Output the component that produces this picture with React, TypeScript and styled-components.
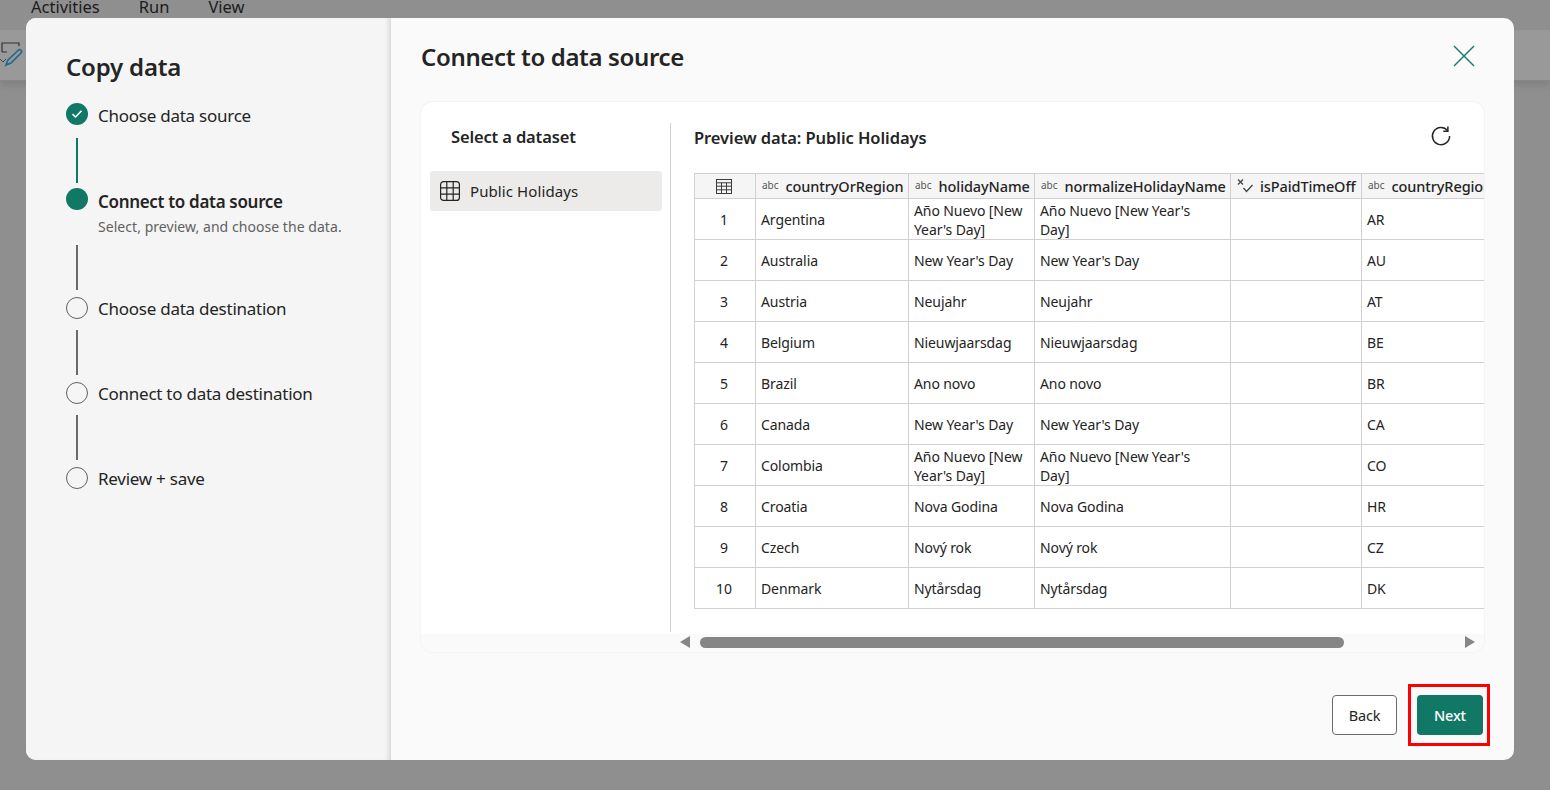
import React from "react";
import styled, { createGlobalStyle } from "styled-components";

const Global = createGlobalStyle`
  html, body { margin: 0; padding: 0; height: 100%; overflow: hidden; }
  body { font-family: "Noto Sans", "Open Sans", "Liberation Sans", sans-serif; color: #242424; background: #8f8f8f; }
`;

const Page = styled.div`
  position: relative;
  width: 1550px;
  height: 790px;
  overflow: hidden;
  background: #8f8f8f;
`;
const MenuBar = styled.div`
  height: 30px;
  display: flex;
  gap: 39px;
  padding-left: 31px;
  background: #8f8f8f;
  color: #1c1c1c;
  font-size: 16.5px;
  line-height: 13px;
  overflow: hidden;
  align-items: flex-start;
`;
const ToolBar = styled.div`
  height: 50px;
  background: #999999;
  border-bottom: 1px solid #868686;
  box-shadow: 0 4px 6px rgba(0, 0, 0, 0.1);
  display: flex;
  align-items: center;
`;
const Dialog = styled.div`
  position: absolute;
  left: 26px;
  top: 18px;
  width: 1488px;
  height: 742px;
  border-radius: 10px;
  overflow: hidden;
  display: flex;
  background: #fafafa;
`;
const Side = styled.aside`
  width: 365px;
  flex: none;
  background: #f5f5f5;
  box-shadow: inset -5px 0 5px -3px rgba(0, 0, 0, 0.13);
  padding: 32px 0 0 40px;
  box-sizing: border-box;
`;
const SideTitle = styled.h1`
  margin: 0 0 20px;
  font-size: 24px;
  line-height: 34px;
  font-weight: 600;
  height: 33px;
  letter-spacing: -0.2px;
`;
const Step = styled.div`
  display: flex;
  gap: 10px;
  align-items: flex-start;
`;
const Dot = styled.span<{ $state: "done" | "active" | "todo" }>`
  width: 22px;
  height: 22px;
  flex: none;
  box-sizing: border-box;
  border-radius: 50%;
  display: flex;
  align-items: center;
  justify-content: center;
  background: ${(p) => (p.$state === "todo" ? "transparent" : "#117865")};
  border: ${(p) => (p.$state === "todo" ? "1px solid #616161" : "none")};
`;
const StepText = styled.div<{ $top: number }>`
  padding-top: ${(p) => p.$top}px;
  margin-bottom: ${(p) => p.$top - 6}px;
`;
const StepLabel = styled.div<{ $bold?: boolean }>`
  font-size: 17px;
  line-height: 24px;
  font-weight: ${(p) => (p.$bold ? 600 : 400)};
  letter-spacing: ${(p) => (p.$bold ? "-0.32px" : "-0.25px")};
  color: #242424;
`;
const StepSub = styled.div`
  font-size: 14px;
  line-height: 20px;
  margin-top: 3px;
  color: #616161;
  letter-spacing: 0.05px;
`;
const Connector = styled.div<{ $top: number; $bottom: number; $done?: boolean }>`
  width: 2px;
  height: 45px;
  margin: ${(p) => p.$top}px 0 ${(p) => p.$bottom}px 10px;
  background: ${(p) => (p.$done ? "#117865" : "#6b6b6b")};
`;
const Main = styled.main`
  flex: 1;
  min-width: 0;
  padding: 0 30px 0 30px;
  display: flex;
  flex-direction: column;
`;
const MainHead = styled.header`
  height: 84px;
  display: flex;
  align-items: flex-start;
  justify-content: space-between;
`;
const MainTitle = styled.h2`
  margin: 21px 0 0;
  font-size: 24px;
  line-height: 36px;
  font-weight: 600;
  letter-spacing: -0.35px;
`;
const CloseBtn = styled.button`
  border: 0;
  background: none;
  padding: 0;
  margin: 27px 9px 0 0;
  width: 22px;
  height: 22px;
  display: flex;
`;
const Card = styled.section`
  height: 550px;
  box-sizing: border-box;
  background: #fff;
  border-radius: 12px;
  box-shadow: 0 0 2px rgba(0, 0, 0, 0.1);
  overflow: hidden;
  display: flex;
  flex-direction: column;
`;
const CardBody = styled.div`
  flex: 1;
  display: flex;
  min-height: 0;
  padding-top: 21px;
`;
const DataPane = styled.div`
  width: 250px;
  flex: none;
  box-sizing: border-box;
  border-right: 1px solid #d1d1d1;
  height: 509px;
  padding: 0 8px 0 9px;
`;
const PaneTitle = styled.h3`
  margin: 1px 0 21px 21px;
  font-size: 16.5px;
  line-height: 26px;
  font-weight: 600;
  letter-spacing: -0.15px;
`;
const DataItem = styled.div`
  height: 40px;
  background: #edebe9;
  border-radius: 3px;
  display: flex;
  align-items: center;
  gap: 10px;
  padding-left: 10px;
  font-size: 15px;
  letter-spacing: 0.1px;
`;
const PreviewPane = styled.div`
  flex: 1;
  min-width: 0;
  padding-left: 23px;
`;
const PreviewHead = styled.div`
  height: 50px;
  display: flex;
  justify-content: space-between;
  align-items: flex-start;
  padding-right: 32px;
`;
const PreviewTitle = styled.h3`
  margin: 3px 0 0;
  font-size: 16.5px;
  line-height: 24px;
  font-weight: 600;
  letter-spacing: -0.07px;
`;
const Refresh = styled.button`
  border: 0;
  background: none;
  padding: 0;
  margin-top: 2px;
  width: 22px;
  height: 22px;
  display: flex;
`;
const TableClip = styled.div`
  overflow: hidden;
  width: 790px;
`;
const Table = styled.table`
  border-collapse: collapse;
  table-layout: fixed;
  width: 880px;
  font-size: 14px;
  line-height: 19px;
  letter-spacing: -0.1px;
  color: #242424;
`;
const Th = styled.th<{ $w: number }>`
  width: ${(p) => p.$w}px;
  height: 25px;
  padding: 0 4px 0 6px;
  box-sizing: border-box;
  background: #f5f5f5;
  border: 1px solid #d1d1d1;
  font-weight: 500;
  text-align: left;
  font-size: 14.5px;
  white-space: nowrap;
  overflow: hidden;
`;
const ThInner = styled.div<{ $gap: number }>`
  display: flex;
  align-items: center;
  gap: ${(p) => p.$gap}px;
`;
const TypeTag = styled.span`
  font-size: 10px;
  color: #555;
  letter-spacing: 0;
  font-weight: 400;
  position: relative;
  top: -1px;
`;
const Td = styled.td<{ $center?: boolean; $pad?: number }>`
  height: 41px;
  padding: 1px ${(p) => p.$pad ?? 3}px 0 ${(p) => (p.$center ? 3 : 5)}px;
  box-sizing: border-box;
  border: 1px solid #d1d1d1;
  text-align: ${(p) => (p.$center ? "center" : "left")};
  overflow: hidden;
`;
const ScrollBar = styled.div`
  height: 18px;
  margin-top: auto;
  background: #fafafa;
  display: flex;
  align-items: center;
  padding: 0 9px 0 259px;
  gap: 10px;
`;
const ArrowL = styled.span`
  width: 0;
  height: 0;
  border-top: 6px solid transparent;
  border-bottom: 6px solid transparent;
  border-right: 10px solid #868686;
  position: relative;
  top: -1px;
`;
const ArrowR = styled.span`
  width: 0;
  height: 0;
  border-top: 6px solid transparent;
  border-bottom: 6px solid transparent;
  border-left: 10px solid #868686;
  margin-left: auto;
  position: relative;
  top: -1px;
`;
const Thumb = styled.span`
  width: 644px;
  height: 11px;
  border-radius: 6px;
  background: #868686;
  position: relative;
  top: -1px;
`;
const Footer = styled.footer`
  display: flex;
  justify-content: flex-end;
  gap: 20px;
  margin-top: 43px;
  padding-right: 1px;
`;
const Button = styled.button<{ $primary?: boolean }>`
  height: 40px;
  font-family: inherit;
  font-size: 14.5px;
  border-radius: 4px;
  position: relative;
  width: ${(p) => (p.$primary ? 66 : 65)}px;
  padding: 0;
  letter-spacing: -0.2px;
  background: ${(p) => (p.$primary ? "#117865" : "#fff")};
  color: ${(p) => (p.$primary ? "#fff" : "#242424")};
  border: ${(p) => (p.$primary ? "0" : "1px solid #6b6b6b")};
  font-weight: ${(p) => (p.$primary ? 500 : 400)};
`;
const Highlight = styled.span`
  position: absolute;
  left: -9px;
  top: -11px;
  width: 82px;
  height: 62px;
  box-sizing: border-box;
  border: 3px solid #ff0000;
  pointer-events: none;
`;
const HeadGridSvg = styled.svg`
  display: block;
  margin-left: 15px;
`;

const columns = [
  { w: 153, name: "countryOrRegion", kind: "abc" },
  { w: 126, name: "holidayName", kind: "abc" },
  { w: 196, name: "normalizeHolidayName", kind: "abc" },
  { w: 131, name: "isPaidTimeOff", kind: "bool" },
  { w: 213, name: "countryRegionCode", kind: "abc" },
];
const y = "Año Nuevo [New Year's Day]";
const rows = [
  ["Argentina", y, y, "AR"],
  ["Australia", "New Year's Day", "New Year's Day", "AU"],
  ["Austria", "Neujahr", "Neujahr", "AT"],
  ["Belgium", "Nieuwjaarsdag", "Nieuwjaarsdag", "BE"],
  ["Brazil", "Ano novo", "Ano novo", "BR"],
  ["Canada", "New Year's Day", "New Year's Day", "CA"],
  ["Colombia", y, y, "CO"],
  ["Croatia", "Nova Godina", "Nova Godina", "HR"],
  ["Czech", "Nový rok", "Nový rok", "CZ"],
  ["Denmark", "Nytårsdag", "Nytårsdag", "DK"],
];

const GridIcon = ({ size = 20, color = "#242424" }: { size?: number; color?: string }) => (
  <svg width={size} height={size} viewBox="0 0 20 20" fill="none" stroke={color} strokeWidth="1.2">
    <rect x="0.6" y="0.6" width="18.8" height="18.8" rx="3" />
    <path d="M6.8 .6V19.4M13.2 .6V19.4M.6 6.8H19.4M.6 13.2H19.4" />
  </svg>
);
const HeadGrid = () => (
  <HeadGridSvg width="16" height="15" viewBox="0 0 16 15" fill="none" stroke="#3d3d3d" strokeWidth="1">
    <rect x="0.5" y="0.5" width="15" height="14" fill="#f5f5f5" />
    <path d="M0.5 3.8H15.5M0.5 7.2H15.5M0.5 10.8H15.5M5.5 3.8V14.5M10.5 3.8V14.5" />
  </HeadGridSvg>
);
const BoolIcon = () => (
  <svg width="17" height="15" viewBox="0 0 17 15" fill="none" stroke="#444" strokeWidth="1.3">
    <path d="M1 0.5L6 5.5M6 0.5L1 5.5" />
    <path d="M6.5 9L9.5 12.5L15.5 6" />
  </svg>
);

export default function App() {
  return (
    <Page>
      <Global />
      <MenuBar>
        <span>Activities</span>
        <span>Run</span>
        <span>View</span>
      </MenuBar>
      <ToolBar>
        <svg width="24" height="28" viewBox="0 0 24 28" fill="none">
          <path d="M2 11V2H19V5M7 11H2" stroke="#333" strokeWidth="1.2" />
          <path d="M0 18L3 21L6 18" stroke="#444" strokeWidth="1" />
          <path d="M6 24L8 19L18 9.5C20 7.5 23 10 21 12L11 22Z" stroke="#1c6a92" strokeWidth="1.6" />
        </svg>
      </ToolBar>
      <Dialog>
        <Side>
          <SideTitle>Copy data</SideTitle>
          <Step>
            <Dot $state="done">
              <svg width="12" height="10" viewBox="0 0 12 10" fill="none" stroke="#fff" strokeWidth="1.6">
                <path d="M1.5 5.2L4.5 8L10.5 1.8" />
              </svg>
            </Dot>
            <StepText $top={1}>
              <StepLabel>Choose data source</StepLabel>
            </StepText>
          </Step>
          <Connector $done $top={13} $bottom={5} />
          <Step>
            <Dot $state="active" />
            <StepText $top={2}>
              <StepLabel $bold>Connect to data source</StepLabel>
              <StepSub>Select, preview, and choose the data.</StepSub>
            </StepText>
          </Step>
          <Connector $top={12} $bottom={7} />
          <Step>
            <Dot $state="todo" />
            <StepText $top={0}>
              <StepLabel>Choose data destination</StepLabel>
            </StepText>
          </Step>
          <Connector $top={11} $bottom={7} />
          <Step>
            <Dot $state="todo" />
            <StepText $top={0}>
              <StepLabel>Connect to data destination</StepLabel>
            </StepText>
          </Step>
          <Connector $top={11} $bottom={7} />
          <Step>
            <Dot $state="todo" />
            <StepText $top={0}>
              <StepLabel>Review + save</StepLabel>
            </StepText>
          </Step>
        </Side>
        <Main>
          <MainHead>
            <MainTitle>Connect to data source</MainTitle>
            <CloseBtn aria-label="Close">
              <svg width="22" height="22" viewBox="0 0 22 22" fill="none" stroke="#117865" strokeWidth="1.4">
                <path d="M1 1L21 21M21 1L1 21" />
              </svg>
            </CloseBtn>
          </MainHead>
          <Card>
            <CardBody>
              <DataPane>
                <PaneTitle>Select a dataset</PaneTitle>
                <DataItem>
                  <GridIcon />
                  Public Holidays
                </DataItem>
              </DataPane>
              <PreviewPane>
                <PreviewHead>
                  <PreviewTitle>Preview data: Public Holidays</PreviewTitle>
                  <Refresh aria-label="Refresh">
                    <svg width="22" height="22" viewBox="0 0 22 22" fill="none" stroke="#242424" strokeWidth="1.5">
                      <path d="M17.6 5.6A8.6 8.6 0 1 0 19.6 11" />
                      <path d="M17.9 1.6V6.2H13.3" />
                    </svg>
                  </Refresh>
                </PreviewHead>
                <TableClip>
                  <Table>
                    <thead>
                      <tr>
                        <Th $w={61}>
                          <HeadGrid />
                        </Th>
                        {columns.map((c) => (
                          <Th key={c.name} $w={c.w}>
                            <ThInner $gap={c.kind === "abc" ? 7 : 6}>
                              {c.kind === "abc" ? <TypeTag>abc</TypeTag> : <BoolIcon />}
                              {c.name}
                            </ThInner>
                          </Th>
                        ))}
                      </tr>
                    </thead>
                    <tbody>
                      {rows.map((r, i) => (
                        <tr key={r[0]}>
                          <Td $center $pad={5}>{i + 1}</Td>
                          <Td>{r[0]}</Td>
                          <Td>{r[1]}</Td>
                          <Td $pad={24}>{r[2]}</Td>
                          <Td />
                          <Td>{r[3]}</Td>
                        </tr>
                      ))}
                    </tbody>
                  </Table>
                </TableClip>
              </PreviewPane>
            </CardBody>
            <ScrollBar>
              <ArrowL />
              <Thumb />
              <ArrowR />
            </ScrollBar>
          </Card>
          <Footer>
            <Button>Back</Button>
            <Button $primary>
              Next
              <Highlight />
            </Button>
          </Footer>
        </Main>
      </Dialog>
    </Page>
  );
}
